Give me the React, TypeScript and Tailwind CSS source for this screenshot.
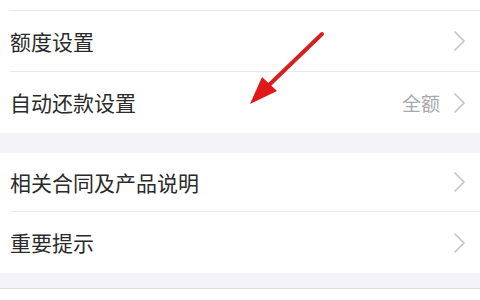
import React from "react";

const font = {
  fontFamily: '"Noto Sans CJK SC", "Noto Sans", sans-serif',
};

function Chevron() {
  return (
    <svg width="13" height="22" viewBox="0 0 13 22" className="shrink-0">
      <path
        d="M2 2 L11 11 L2 20"
        fill="none"
        stroke="#c4c4c8"
        strokeWidth="1.7"
        strokeLinecap="round"
        strokeLinejoin="round"
      />
    </svg>
  );
}

function Row({
  label,
  value,
  height,
}: {
  label: string;
  value?: string;
  height: string;
}) {
  return (
    <div className={`flex items-center justify-between pl-[10px] pr-[14px] bg-white ${height}`}>
      <span className="text-[21px] text-[#2a2a2a] leading-none">{label}</span>
      <div className="flex items-center gap-[13px]">
        {value && (
          <span className="text-[19px] text-[#a8a8a8] leading-none">{value}</span>
        )}
        <Chevron />
      </div>
    </div>
  );
}

export default function App() {
  return (
    <div className="relative w-[480px] h-[300px] overflow-hidden bg-white" style={font}>
      <div className="h-[10px] bg-white" />
      <div className="ml-[10px] h-px bg-[#e8e8ec]" />
      <Row label="额度设置" height="h-[60px]" />
      <div className="ml-[10px] h-px bg-[#e8e8ec]" />
      <Row label="自动还款设置" value="全额" height="h-[61px]" />
      <div className="h-[20px] bg-[#f4f4f8]" />
      <Row label="相关合同及产品说明" height="h-[58px]" />
      <div className="ml-[10px] h-px bg-[#ececf0]" />
      <Row label="重要提示" height="h-[61px]" />
      <div className="h-[15px] bg-[#f4f4f8]" />
      <div className="h-px bg-[#dcdcdc]" />
      <div className="h-[11px] bg-white" />

      <svg
        className="absolute left-0 top-0 pointer-events-none"
        width="480"
        height="300"
        viewBox="0 0 480 300"
      >
        <line
          x1="322"
          y1="34"
          x2="268"
          y2="86"
          stroke="#d42020"
          strokeWidth="4"
          strokeLinecap="round"
        />
        <polygon points="250,104 262,77 277,91" fill="#e01818" />
      </svg>
    </div>
  );
}
